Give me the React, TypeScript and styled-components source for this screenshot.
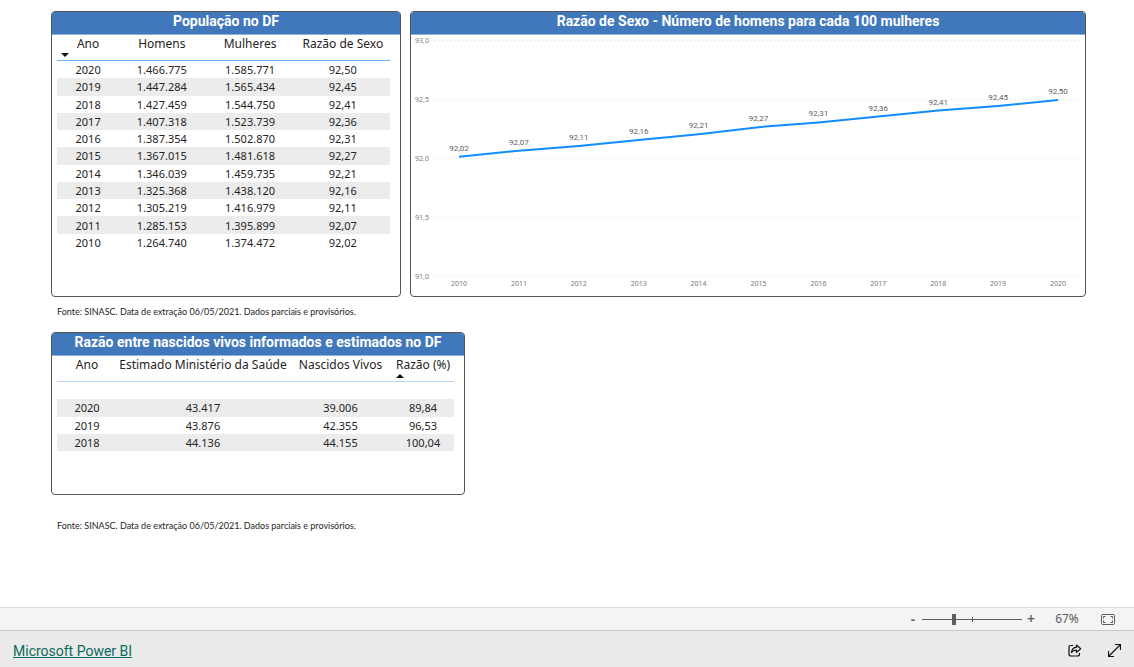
import React, { useState } from "react";
import styled, { createGlobalStyle } from "styled-components";

const GlobalStyle = createGlobalStyle`
  *, *::before, *::after { box-sizing: border-box; }
  body {
    margin: 0;
    background: #fff;
    color: #252423;
    font-family: "Noto Sans", "Open Sans", sans-serif;
  }
`;

const Page = styled.div`
  display: flex;
  flex-direction: column;
  min-height: 100vh;
`;

const Report = styled.main`
  flex: 1;
  padding: 11px 48px 11px 51px;
`;

const TopRow = styled.div`
  display: grid;
  grid-template-columns: minmax(0, 350fr) minmax(0, 676fr);
  gap: 9px;
`;

const Card = styled.section<{ $minHeight: number; $width?: string }>`
  width: ${(p) => p.$width ?? "auto"};
  min-height: ${(p) => p.$minHeight}px;
  border: 1px solid #555;
  border-radius: 4px;
  overflow: hidden;
  background: #fff;
`;

const CardTitle = styled.h2`
  margin: 0;
  height: 23px;
  border-bottom: 1px solid #8fb0dc;
  background: #4178bc;
  color: #fff;
  font-family: Roboto, sans-serif;
  font-size: 14px;
  font-weight: 700;
  line-height: 19px;
  text-align: center;
  white-space: nowrap;
`;

const TableArea = styled.div`
  padding: 0 10px 0 5px;
`;

const DataTable = styled.table<{ $height: number }>`
  width: 100%;
  height: ${(p) => p.$height}px;
  table-layout: fixed;
  border-collapse: separate;
  border-spacing: 0;
  font-size: 11px;
  line-height: 17px;
`;

const HeadCell = styled.th<{ $line: string }>`
  height: 26px;
  padding: 0;
  border-bottom: 1px solid ${(p) => p.$line};
  vertical-align: top;
  font-weight: 400;
`;

const HeadButton = styled.button`
  display: block;
  width: 100%;
  padding: 0;
  border: 0;
  background: none;
  color: inherit;
  font: inherit;
  font-size: 12px;
  line-height: 18px;
  text-align: center;
  white-space: nowrap;
  cursor: pointer;
`;

const SortMark = styled.svg`
  display: block;
  margin-left: 4px;
`;

const BodyRow = styled.tr<{ $shaded: boolean }>`
  background: ${(p) => (p.$shaded ? "#ececec" : "#fff")};
`;

const Cell = styled.td`
  padding: 0;
  text-align: center;
`;

const Source = styled.p<{ $gap: number }>`
  margin: ${(p) => p.$gap}px 0 0 6px;
  font-family: Lato, sans-serif;
  font-size: 9px;
  line-height: 14px;
`;

const LowerBlock = styled.div`
  margin-top: 13px;
`;

const Chart = styled.svg`
  display: block;
  width: 100%;
  height: auto;
`;

const ZoomBar = styled.div`
  display: flex;
  align-items: center;
  justify-content: flex-end;
  height: 24px;
  padding-right: 19px;
  border-top: 1px solid #dcdcdc;
  border-bottom: 1px solid #c8c8c8;
  background: #f4f4f4;
  color: #605e5c;
`;

const ZoomButton = styled.button`
  width: 18px;
  padding: 0;
  border: 0;
  background: none;
  color: inherit;
  font-family: inherit;
  font-size: 14px;
  font-weight: 600;
  line-height: 20px;
  cursor: pointer;
`;

const Slider = styled.input`
  appearance: none;
  width: 100px;
  height: 12px;
  margin: 0;
  background:
    linear-gradient(#605e5c, #605e5c) center / 100% 1px no-repeat,
    linear-gradient(#605e5c, #605e5c) center / 1px 5px no-repeat;

  &::-webkit-slider-thumb {
    appearance: none;
    width: 4px;
    height: 11px;
    background: #605e5c;
  }
`;

const ZoomValue = styled.output`
  width: 50px;
  margin: 0 9px 0 2px;
  font-size: 12px;
  line-height: 20px;
  text-align: center;
`;

const IconButton = styled.button`
  display: flex;
  padding: 0;
  border: 0;
  background: none;
  color: inherit;
  cursor: pointer;
`;

const Footer = styled.footer`
  display: flex;
  align-items: center;
  justify-content: space-between;
  height: 36px;
  padding: 3px 13px 0;
  background: #eaeaea;
`;

const BrandLink = styled.a`
  color: #0b6a5b;
  font-family: Roboto, sans-serif;
  font-size: 14px;
  line-height: 20px;
`;

const FooterActions = styled.div`
  display: flex;
  gap: 26px;
  color: #111;
`;

type Sort = { column: number; direction: "asc" | "desc" };

interface Column {
  label: string;
  share: number;
}

interface GridProps {
  columns: Column[];
  rows: string[][];
  sort: Sort;
  height: number;
  line: string;
}

const populationColumns: Column[] = [
  { label: "Ano", share: 62 },
  { label: "Homens", share: 85 },
  { label: "Mulheres", share: 91 },
  { label: "Razão de Sexo", share: 94 },
];

const population = [
  ["2020", "1.466.775", "1.585.771", "92,50"],
  ["2019", "1.447.284", "1.565.434", "92,45"],
  ["2018", "1.427.459", "1.544.750", "92,41"],
  ["2017", "1.407.318", "1.523.739", "92,36"],
  ["2016", "1.387.354", "1.502.870", "92,31"],
  ["2015", "1.367.015", "1.481.618", "92,27"],
  ["2014", "1.346.039", "1.459.735", "92,21"],
  ["2013", "1.325.368", "1.438.120", "92,16"],
  ["2012", "1.305.219", "1.416.979", "92,11"],
  ["2011", "1.285.153", "1.395.899", "92,07"],
  ["2010", "1.264.740", "1.374.472", "92,02"],
];

const birthColumns: Column[] = [
  { label: "Ano", share: 60 },
  { label: "Estimado Ministério da Saúde", share: 172 },
  { label: "Nascidos Vivos", share: 103 },
  { label: "Razão (%)", share: 62 },
];

const births = [
  ["\u00a0", "\u00a0", "\u00a0", "\u00a0"],
  ["2020", "43.417", "39.006", "89,84"],
  ["2019", "43.876", "42.355", "96,53"],
  ["2018", "44.136", "44.155", "100,04"],
];

function DataGrid({ columns, rows, sort, height, line }: GridProps) {
  const total = columns.reduce((sum, c) => sum + c.share, 0);
  return (
    <TableArea>
      <DataTable $height={height}>
        <colgroup>
          {columns.map((c) => (
            <col key={c.label} width={`${(c.share / total) * 100}%`} />
          ))}
        </colgroup>
        <thead>
          <tr>
            {columns.map((c, i) => (
              <HeadCell key={c.label} scope="col" $line={line}>
                <HeadButton type="button">
                  {c.label}
                  {sort.column === i && (
                    <SortMark width="8" height="4" viewBox="0 0 8 4" aria-hidden="true">
                      <path d={sort.direction === "desc" ? "M0 0H8L4 4Z" : "M0 4H8L4 0Z"} fill="#111" />
                    </SortMark>
                  )}
                </HeadButton>
              </HeadCell>
            ))}
          </tr>
        </thead>
        <tbody>
          {rows.map((row, r) => (
            <BodyRow key={r} $shaded={r % 2 === 1}>
              {row.map((value, i) => (
                <Cell key={i}>{value}</Cell>
              ))}
            </BodyRow>
          ))}
        </tbody>
      </DataTable>
    </TableArea>
  );
}

const AxisText = styled.text`
  fill: #777;
  font-size: 7px;
  text-anchor: middle;
`;

const PointText = styled.text`
  fill: #605e5c;
  font-family: Roboto, sans-serif;
  font-size: 8px;
  text-anchor: middle;
`;

const GridLine = styled.line`
  stroke: #dedede;
  stroke-dasharray: 1 3;
`;

const Trend = styled.polyline`
  fill: none;
  stroke: #118dff;
  stroke-width: 2;
`;

const ticks = ["93,0", "92,5", "92,0", "91,5", "91,0"];

function RatioChart() {
  const points = [...population].reverse().map(([year, , , label], i) => ({
    year,
    label,
    x: 48 + (i * 599) / 10,
    y: 242 - (parseFloat(label.replace(",", ".")) - 91) * 118,
  }));
  return (
    <Chart viewBox="0 0 674 260" role="img" aria-label="Razão de Sexo por ano">
      {ticks.map((tick, i) => (
        <g key={tick}>
          <AxisText x={11} y={8 + i * 59}>{tick}</AxisText>
          <GridLine x1={24} x2={670} y1={5.5 + i * 59} y2={5.5 + i * 59} />
        </g>
      ))}
      <Trend points={points.map((p) => `${p.x},${p.y}`).join(" ")} />
      {points.map((p) => (
        <g key={p.year}>
          <PointText x={p.x} y={Math.round(p.y - 6)}>{p.label}</PointText>
          <AxisText x={p.x} y={251}>{p.year}</AxisText>
        </g>
      ))}
    </Chart>
  );
}

function FitIcon() {
  return (
    <svg width="14" height="11" viewBox="0 0 14 11" fill="none" stroke="currentColor" aria-hidden="true">
      <rect x="0.5" y="0.5" width="13" height="10" rx="1" />
      <path d="M4.5 2.5H2.5V4.5M9.5 2.5H11.5V4.5M2.5 6.5V8.5H4.5M11.5 6.5V8.5H9.5" />
    </svg>
  );
}

function ShareIcon() {
  return (
    <svg width="14" height="13" viewBox="0 0 14 13" fill="none" stroke="currentColor" strokeLinejoin="round" aria-hidden="true">
      <path strokeWidth="1.2" d="M5 1.5H3Q1 1.5 1 3.5V10Q1 12 3 12H9.5Q11.5 12 11.5 10V9" />
      <path strokeWidth="1.2" d="M8.5 1L12.7 4.7L8.5 8.4V6.2Q5.5 6 3.5 8.5Q4 3.7 8.5 3.2Z" />
    </svg>
  );
}

function ExpandIcon() {
  return (
    <svg width="13" height="13" viewBox="0 0 13 13" fill="none" stroke="currentColor" strokeWidth="1.2" aria-hidden="true">
      <path d="M7 0.5H12.5V6M12.5 0.5L0.5 12.5M0.5 7V12.5H6" />
    </svg>
  );
}

export default function App() {
  const [zoom, setZoom] = useState(31);
  const source = "Fonte: SINASC. Data de extração 06/05/2021. Dados parciais e provisórios.";
  return (
    <Page>
      <GlobalStyle />
      <Report>
        <TopRow>
          <Card $minHeight={286}>
            <CardTitle>População no DF</CardTitle>
            <DataGrid
              columns={populationColumns}
              rows={population}
              sort={{ column: 0, direction: "desc" }}
              height={216}
              line="#6cb2f7"
            />
          </Card>
          <Card $minHeight={286}>
            <CardTitle>Razão de Sexo - Número de homens para cada 100 mulheres</CardTitle>
            <RatioChart />
          </Card>
        </TopRow>
        <Source $gap={8}>{source}</Source>
        <LowerBlock>
          <Card $minHeight={163} $width="40%">
            <CardTitle>Razão entre nascidos vivos informados e estimados no DF</CardTitle>
            <DataGrid
              columns={birthColumns}
              rows={births}
              sort={{ column: 3, direction: "asc" }}
              height={95}
              line="#b5d8fa"
            />
          </Card>
          <Source $gap={24}>{source}</Source>
        </LowerBlock>
      </Report>
      <ZoomBar>
        <ZoomButton type="button" aria-label="Reduzir" onClick={() => setZoom(Math.max(0, zoom - 5))}>-</ZoomButton>
        <Slider
          type="range"
          min={0}
          max={100}
          value={zoom}
          aria-label="Zoom"
          onChange={(e) => setZoom(Number(e.target.value))}
        />
        <ZoomButton type="button" aria-label="Ampliar" onClick={() => setZoom(Math.min(100, zoom + 5))}>+</ZoomButton>
        <ZoomValue>67%</ZoomValue>
        <IconButton type="button" aria-label="Ajustar à página"><FitIcon /></IconButton>
      </ZoomBar>
      <Footer>
        <BrandLink href="#">Microsoft Power BI</BrandLink>
        <FooterActions>
          <IconButton type="button" aria-label="Compartilhar"><ShareIcon /></IconButton>
          <IconButton type="button" aria-label="Tela inteira"><ExpandIcon /></IconButton>
        </FooterActions>
      </Footer>
    </Page>
  );
}
